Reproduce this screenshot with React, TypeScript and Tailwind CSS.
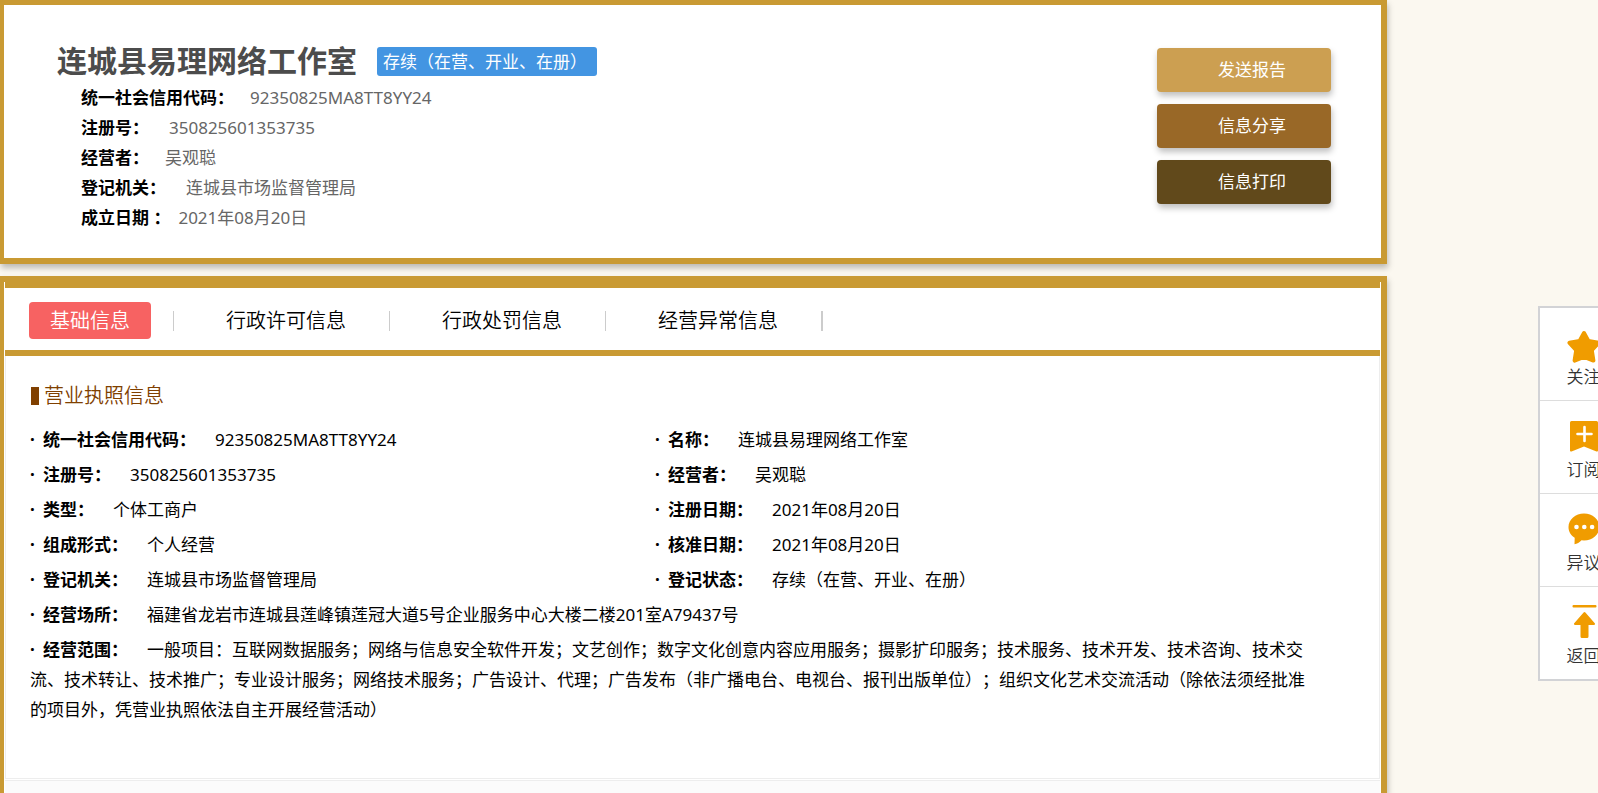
import React, { useState } from 'react';

interface Field {
  label: string;
  value: string;
}

const summary = [
  { label: '统一社会信用代码：', value: '92350825MA8TT8YY24', gap: 'mr-4' },
  { label: '注册号：', value: '350825601353735', gap: 'mr-5' },
  { label: '经营者：', value: '吴观聪', gap: 'mr-4' },
  { label: '登记机关：', value: '连城县市场监督管理局', gap: 'mr-5' },
  { label: '成立日期 ：', value: '2021年08月20日', gap: 'mr-2' },
];

const actions = [
  { text: '发送报告', color: 'bg-[#cc9f51]' },
  { text: '信息分享', color: 'bg-[#996827]' },
  { text: '信息打印', color: 'bg-[#61491b]' },
];

const tabs = ['基础信息', '行政许可信息', '行政处罚信息', '经营异常信息'];

const license: Field[] = [
  { label: '统一社会信用代码：', value: '92350825MA8TT8YY24' },
  { label: '名称：', value: '连城县易理网络工作室' },
  { label: '注册号：', value: '350825601353735' },
  { label: '经营者：', value: '吴观聪' },
  { label: '类型：', value: '个体工商户' },
  { label: '注册日期：', value: '2021年08月20日' },
  { label: '组成形式：', value: '个人经营' },
  { label: '核准日期：', value: '2021年08月20日' },
  { label: '登记机关：', value: '连城县市场监督管理局' },
  { label: '登记状态：', value: '存续（在营、开业、在册）' },
];

const licenseWide: Field[] = [
  { label: '经营场所：', value: '福建省龙岩市连城县莲峰镇莲冠大道5号企业服务中心大楼二楼201室A79437号' },
  {
    label: '经营范围：',
    value:
      '一般项目：互联网数据服务；网络与信息安全软件开发；文艺创作；数字文化创意内容应用服务；摄影扩印服务；技术服务、技术开发、技术咨询、技术交流、技术转让、技术推广；专业设计服务；网络技术服务；广告设计、代理；广告发布（非广播电台、电视台、报刊出版单位）；组织文化艺术交流活动（除依法须经批准的项目外，凭营业执照依法自主开展经营活动）',
  },
];

const StarIcon = () => (
  <svg viewBox="0 0 34 38" className="w-[34px] h-[38px]" fill="#f09c00" stroke="#f09c00" strokeWidth="4" strokeLinejoin="round">
    <path d="M17 7 L21.4 15 L31.5 16.8 L24.8 24.2 L26.4 34.6 L17 31 L7.6 34.6 L9.2 24.2 L2.5 16.8 L12.6 15 Z" />
  </svg>
);

const BookmarkIcon = () => (
  <svg viewBox="0 0 34 38" className="w-[34px] h-[38px]">
    <path d="M4.5 2 H29.5 Q31 2 31 3.5 V31.5 Q31 33 29.5 32.4 L17 27.5 L4.5 32.4 Q3 33 3 31.5 V3.5 Q3 2 4.5 2 Z" fill="#f09c00" />
    <path d="M17.5 8 V22 M10.5 15 H24.5" stroke="#fff" strokeWidth="2.6" strokeLinecap="round" />
  </svg>
);

const CommentIcon = () => (
  <svg viewBox="0 0 34 38" className="w-[34px] h-[38px]">
    <path d="M17 1.5 C25.5 1.5 32.5 7.4 32.5 15 C32.5 22.6 25.5 28.5 17 28.5 L14.5 28.3 C12.5 30.5 10 31.8 7.5 32.3 L7.7 25.8 C3.8 23.3 1.5 19.5 1.5 15 C1.5 7.4 8.5 1.5 17 1.5 Z" fill="#f09c00" />
    <circle cx="9.5" cy="15" r="2.3" fill="#fff" />
    <circle cx="17.3" cy="15" r="2.3" fill="#fff" />
    <circle cx="25.1" cy="15" r="2.3" fill="#fff" />
  </svg>
);

const TopIcon = () => (
  <svg viewBox="0 0 34 38" className="w-[34px] h-[38px]" fill="#f09c00">
    <rect x="5.5" y="0" width="24" height="2.6" rx="1" />
    <path d="M16.6 7.4 Q17.5 6.6 18.4 7.4 L28 18.5 Q28.4 19.8 27 20 H21.5 V31.5 Q21.5 33 20 33 H15 Q13.5 33 13.5 31.5 V20 H8 Q6.6 19.8 7 18.5 Z" />
  </svg>
);

const sideItems = [
  { text: '关注', icon: <StarIcon /> },
  { text: '订阅', icon: <BookmarkIcon /> },
  { text: '异议', icon: <CommentIcon /> },
  { text: '返回', icon: <TopIcon /> },
];

const LicenseField: React.FC<{ field: Field }> = ({ field }) => (
  <>
    <span className="inline-block w-[13px] font-bold">·</span>
    <span className="font-bold mr-[19px]">{field.label}</span>
    <span>{field.value}</span>
  </>
);

const App: React.FC = () => {
  const [activeTab, setActiveTab] = useState(0);

  return (
    <div className="min-h-screen flex flex-col gap-3 pr-[211px] bg-[#fbf8f0] overflow-hidden font-['Noto_Sans','Noto_Sans_CJK_SC',sans-serif] font-normal text-[17px] leading-[30px] text-black [text-spacing-trim:space-all]">
      {/* 企业概要 */}
      <header className="flex justify-between items-start bg-white border-[#c99a33] border-t-5 border-r-6 border-b-6 border-l-4 shadow-[1px_4px_6px_rgba(0,0,0,0.25)]">
        <div className="pt-[41px] pb-[25px] pl-[53px]">
          <div className="flex items-center gap-5 mb-[7px]">
            <h1 className="text-[30px] leading-[30px] font-bold text-[#4c4c4c]">连城县易理网络工作室</h1>
            <span className="bg-[#4395e2] text-white rounded-[3px] pl-[6px] pr-[10px] leading-[29px]">
              存续（在营、开业、在册）
            </span>
          </div>
          <ul className="pl-6">
            {summary.map((item) => (
              <li key={item.label}>
                <span className={`font-bold ${item.gap}`}>{item.label}</span>
                <span className="text-[#666]">{item.value}</span>
              </li>
            ))}
          </ul>
        </div>
        <div className="flex flex-col gap-3 pt-[43px] pr-[50px]">
          {actions.map((action) => (
            <button
              key={action.text}
              type="button"
              className={`${action.color} w-[174px] h-[44px] pl-[61px] text-left text-white rounded-[4px] shadow-[1px_4px_6px_rgba(0,0,0,0.25)]`}
            >
              {action.text}
            </button>
          ))}
        </div>
      </header>

      {/* 详细信息 */}
      <main className="flex-1 flex flex-col bg-white border-[#c99a33] border-t-6 border-r-6 border-l-4 px-px shadow-[1px_4px_6px_rgba(0,0,0,0.25)]">
        <nav className="flex items-center h-[74px] pt-[3px] pl-6 border-y-6 border-[#c99a33] font-[350]">
          {tabs.map((tab, i) => (
            <div key={tab} className="group flex items-center">
              <button
                type="button"
                onClick={() => setActiveTab(i)}
                className={`h-[37px] px-[21px] mr-[22px] rounded-[4px] text-[20px] ${
                  i === activeTab ? 'bg-[#f76262] text-white' : 'text-black'
                }`}
              >
                {tab}
              </button>
              <span className="w-px h-5 mr-[31px] bg-[#ccc] group-last:w-0.5" />
            </div>
          ))}
        </nav>

        <section className="border-x border-b border-[#ededed] pt-[25px] pb-[53px] pl-6 pr-[66px]">
          <h2 className="flex items-center gap-[5px] mb-[14px] pl-px text-[20px] font-[350] text-[#804000]">
            <span className="w-2 h-[18px] bg-[#804000]" />
            营业执照信息
          </h2>
          <ul className="grid grid-cols-[625px_1fr] gap-y-[5px]">
            {license.map((field) => (
              <li key={field.label}>
                <LicenseField field={field} />
              </li>
            ))}
            {licenseWide.map((field) => (
              <li key={field.label} className="col-span-2">
                <LicenseField field={field} />
              </li>
            ))}
          </ul>
        </section>
        <div className="flex-1 mt-px border-t border-[#ededed] bg-[#fbfbfb]" />
      </main>

      {/* 右侧悬浮工具栏 */}
      <aside className="fixed top-[306px] right-[-31px] w-[91px] bg-white border-2 border-[#d2d3d6]">
        {sideItems.map((item) => (
          <button
            key={item.text}
            type="button"
            className="flex flex-col items-center w-full h-[93px] pt-[18px] font-[350] text-[#333] border-b border-[#ddd] last:h-[92px] last:border-b-0"
          >
            {item.icon}
            <span className="leading-[26px]">{item.text}</span>
          </button>
        ))}
      </aside>
    </div>
  );
};

export default App;
